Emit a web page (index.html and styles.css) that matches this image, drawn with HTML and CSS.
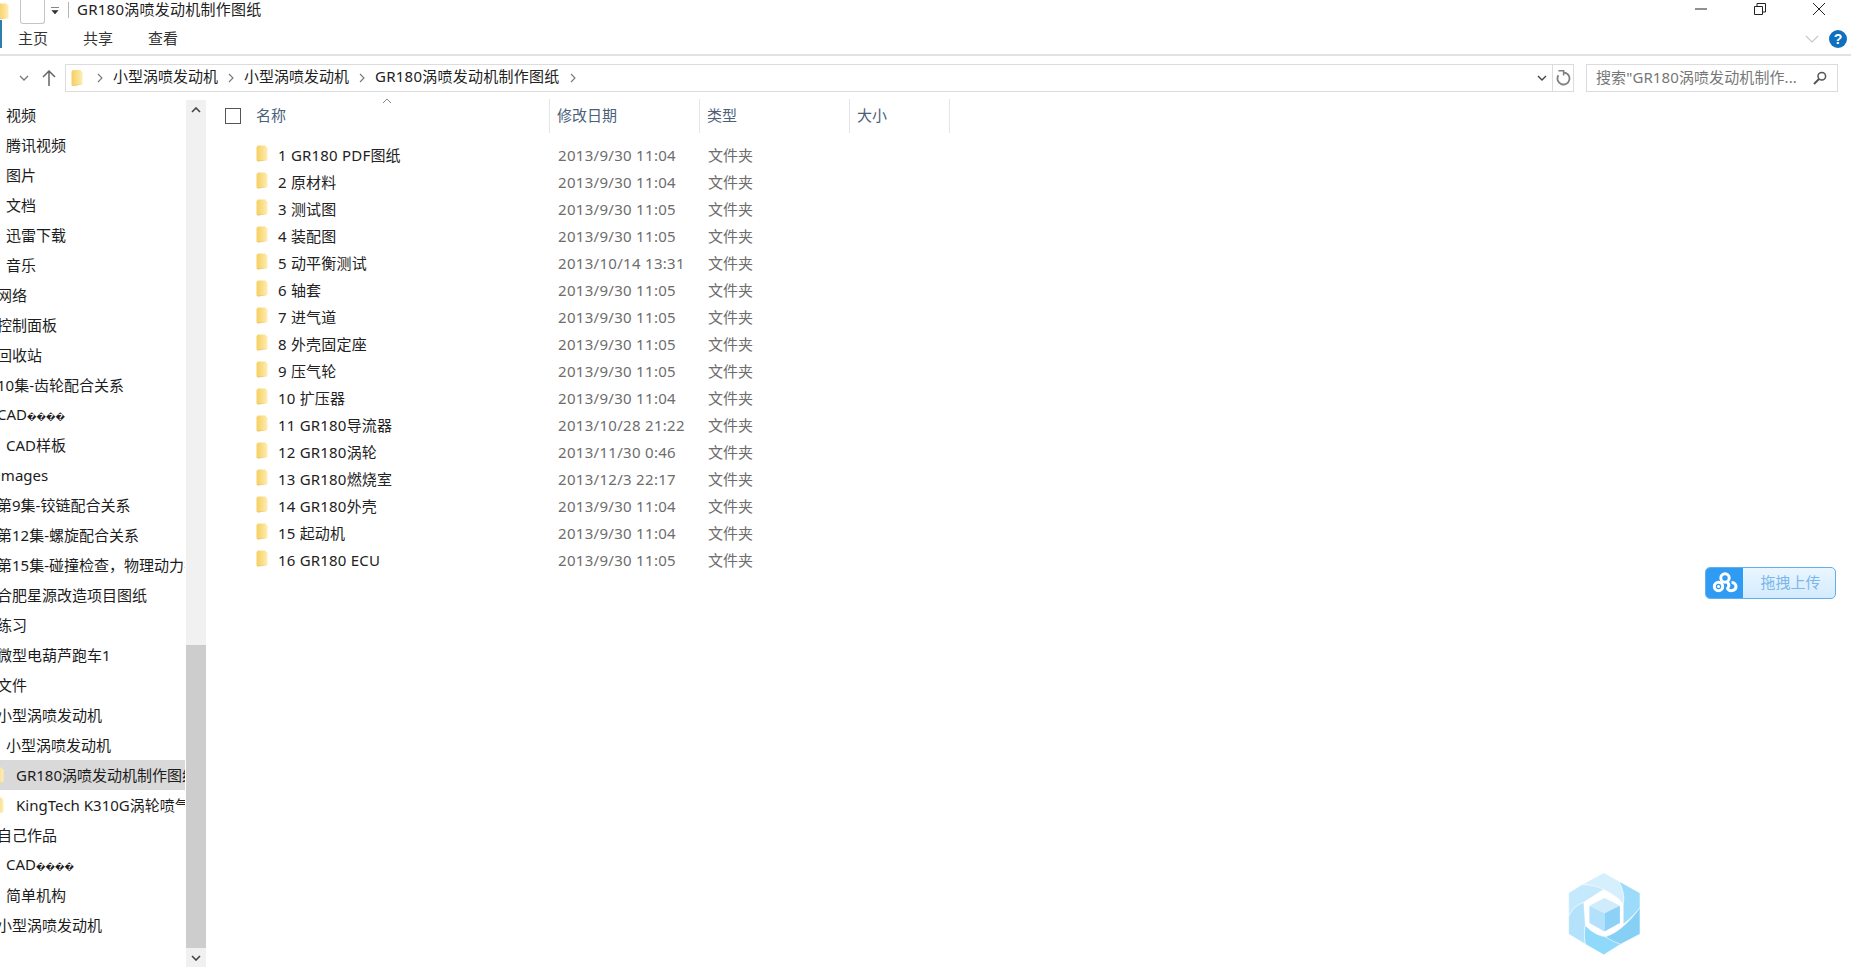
FILE: index.html
```html
<!DOCTYPE html>
<html lang="zh-CN">
<head>
<meta charset="utf-8">
<title>GR180涡喷发动机制作图纸</title>
<link rel="stylesheet" href="styles.css">
</head>
<body>
<svg class="defs" width="0" height="0" aria-hidden="true">
  <defs>
    <linearGradient id="fg" x1="0" y1="0" x2="1" y2="0">
      <stop offset="0" stop-color="#f6cf62"/>
      <stop offset="0.6" stop-color="#fbe08e"/>
      <stop offset="1" stop-color="#fdeeb8"/>
    </linearGradient>
    <symbol id="folder" viewBox="0 0 12 17">
      <path d="M2 0.5 L10 0.5 L10 2 L11.5 2 L11.5 15 L2 16.5 L0.5 15.5 L0.5 2 Z" fill="url(#fg)"/>
      <path d="M0.5 15.5 L11.5 15 L2 16.5 Z" fill="#e6c878"/>
    </symbol>
  </defs>
</svg>

<header class="titlebar">
  <div class="title-left">
    <svg class="tb-folder" viewBox="0 0 12 17"><use href="#folder"/></svg>
    <span class="qa-box"></span>
    <svg class="qa-drop" viewBox="0 0 8 8"><path d="M0 0.5H8M1 3.5H7L4 7Z" fill="#333" stroke="#333" stroke-width="0.6"/></svg>
    <span class="tb-sep"></span>
    <span class="tb-title gr">GR180涡喷发动机制作图纸</span>
  </div>
  <div class="winbtns">
    <svg class="wb" viewBox="0 0 12 12"><path d="M0 6H12" stroke="#222" fill="none"/></svg>
    <svg class="wb" viewBox="0 0 12 12"><path d="M0.5 3.5H8.5V11.5H0.5ZM3 3.5V0.5H11.5V9H8.5" stroke="#222" fill="none"/></svg>
    <svg class="wb" viewBox="0 0 12 12"><path d="M0 0L12 12M12 0L0 12" stroke="#222" fill="none"/></svg>
  </div>
</header>

<nav class="ribbon">
  <span class="tab-mark"></span>
  <div class="tabs">
    <span class="tab">主页</span>
    <span class="tab">共享</span>
    <span class="tab">查看</span>
  </div>
  <div class="ribbon-right">
    <svg class="rib-chev" viewBox="0 0 14 8"><path d="M1 1L7 7L13 1" stroke="#c4c9cd" stroke-width="1.2" fill="none"/></svg>
    <span class="help">?</span>
  </div>
</nav>

<section class="addr-row">
  <svg class="nav-down" viewBox="0 0 10 6"><path d="M1 1L5 5L9 1" stroke="#777" stroke-width="1.3" fill="none"/></svg>
  <svg class="nav-up" viewBox="0 0 14 16"><path d="M7 16V1M1 7L7 1L13 7" stroke="#666" stroke-width="1.5" fill="none"/></svg>
  <div class="addr">
    <svg class="addr-folder" viewBox="0 0 12 17"><use href="#folder"/></svg>
    <svg class="crumb-chev first" viewBox="0 0 6 10"><path d="M1 1L5 5L1 9" stroke="#777" stroke-width="1.1" fill="none"/></svg>
    <span class="crumb">小型涡喷发动机</span>
    <svg class="crumb-chev" viewBox="0 0 6 10"><path d="M1 1L5 5L1 9" stroke="#777" stroke-width="1.1" fill="none"/></svg>
    <span class="crumb">小型涡喷发动机</span>
    <svg class="crumb-chev" viewBox="0 0 6 10"><path d="M1 1L5 5L1 9" stroke="#777" stroke-width="1.1" fill="none"/></svg>
    <span class="crumb gr">GR180涡喷发动机制作图纸</span>
    <svg class="crumb-chev" viewBox="0 0 6 10"><path d="M1 1L5 5L1 9" stroke="#777" stroke-width="1.1" fill="none"/></svg>
    <svg class="addr-drop" viewBox="0 0 10 6"><path d="M1 1L5 5L9 1" stroke="#444" stroke-width="1.4" fill="none"/></svg>
    <span class="addr-refresh">
      <svg viewBox="0 0 16 16"><path d="M8.5 2.5A6 6 0 1 1 3.4 5.3" stroke="#808080" stroke-width="1.8" fill="none"/><path d="M3.4 0.8H8.6V5.6" stroke="#808080" stroke-width="1.5" fill="none"/></svg>
    </span>
  </div>
  <div class="search">
    <span class="search-text">搜索"GR180涡喷发动机制作...</span>
    <svg class="search-ico" viewBox="0 0 14 14"><circle cx="8.8" cy="5.2" r="3.8" stroke="#555" stroke-width="1.5" fill="none"/><path d="M6 8L1 13" stroke="#555" stroke-width="2" fill="none"/></svg>
  </div>
</section>

<main class="main">
  <aside class="side">
    <ul class="tree">
      <li class="node l1">视频</li>
      <li class="node l1">腾讯视频</li>
      <li class="node l1">图片</li>
      <li class="node l1">文档</li>
      <li class="node l1">迅雷下载</li>
      <li class="node l1">音乐</li>
      <li class="node l0">网络</li>
      <li class="node l0">控制面板</li>
      <li class="node l0">回收站</li>
      <li class="node l0">10集-齿轮配合关系</li>
      <li class="node l0"><span>CAD<span class="bad">����</span></span></li>
      <li class="node l1">CAD样板</li>
      <li class="node l0">images</li>
      <li class="node l0">第9集-铰链配合关系</li>
      <li class="node l0">第12集-螺旋配合关系</li>
      <li class="node l0">第15集-碰撞检查，物理动力学</li>
      <li class="node l0">合肥星源改造项目图纸</li>
      <li class="node l0">练习</li>
      <li class="node l0">微型电葫芦跑车1</li>
      <li class="node l0">文件</li>
      <li class="node l0">小型涡喷发动机</li>
      <li class="node l1">小型涡喷发动机</li>
      <li class="node l2 sel"><svg class="tree-folder" viewBox="0 0 12 17"><use href="#folder"/></svg>GR180涡喷发动机制作图纸</li>
      <li class="node l2"><svg class="tree-folder" viewBox="0 0 12 17"><use href="#folder"/></svg>KingTech K310G涡轮喷气发动机</li>
      <li class="node l0">自己作品</li>
      <li class="node l1"><span>CAD<span class="bad">����</span></span></li>
      <li class="node l1">简单机构</li>
      <li class="node l0">小型涡喷发动机</li>
    </ul>
    <div class="sbar">
      <span class="sbtn"><svg viewBox="0 0 10 6"><path d="M1 5L5 1L9 5" stroke="#444" stroke-width="1.6" fill="none"/></svg></span>
      <span class="strack"></span>
      <span class="sthumb"></span>
      <span class="sbtn"><svg viewBox="0 0 10 6"><path d="M1 1L5 5L9 1" stroke="#444" stroke-width="1.6" fill="none"/></svg></span>
    </div>
  </aside>

  <section class="files">
    <div class="head">
      <span class="h-check"><span class="checkbox"></span></span>
      <span class="hc h-name">名称
        <svg class="sort" viewBox="0 0 10 6"><path d="M1 5L5 1L9 5" stroke="#888" fill="none"/></svg>
      </span>
      <span class="hc h-date">修改日期</span>
      <span class="hc h-type">类型</span>
      <span class="hc h-size">大小</span>
    </div>
    <ul class="rows">
      <li class="row"><svg class="row-folder" viewBox="0 0 12 17"><use href="#folder"/></svg><span class="c-name">1 GR180 PDF图纸</span><span class="c-date">2013/9/30 11:04</span><span class="c-type">文件夹</span></li>
      <li class="row"><svg class="row-folder" viewBox="0 0 12 17"><use href="#folder"/></svg><span class="c-name">2 原材料</span><span class="c-date">2013/9/30 11:04</span><span class="c-type">文件夹</span></li>
      <li class="row"><svg class="row-folder" viewBox="0 0 12 17"><use href="#folder"/></svg><span class="c-name">3 测试图</span><span class="c-date">2013/9/30 11:05</span><span class="c-type">文件夹</span></li>
      <li class="row"><svg class="row-folder" viewBox="0 0 12 17"><use href="#folder"/></svg><span class="c-name">4 装配图</span><span class="c-date">2013/9/30 11:05</span><span class="c-type">文件夹</span></li>
      <li class="row"><svg class="row-folder" viewBox="0 0 12 17"><use href="#folder"/></svg><span class="c-name">5 动平衡测试</span><span class="c-date">2013/10/14 13:31</span><span class="c-type">文件夹</span></li>
      <li class="row"><svg class="row-folder" viewBox="0 0 12 17"><use href="#folder"/></svg><span class="c-name">6 轴套</span><span class="c-date">2013/9/30 11:05</span><span class="c-type">文件夹</span></li>
      <li class="row"><svg class="row-folder" viewBox="0 0 12 17"><use href="#folder"/></svg><span class="c-name">7 进气道</span><span class="c-date">2013/9/30 11:05</span><span class="c-type">文件夹</span></li>
      <li class="row"><svg class="row-folder" viewBox="0 0 12 17"><use href="#folder"/></svg><span class="c-name">8 外壳固定座</span><span class="c-date">2013/9/30 11:05</span><span class="c-type">文件夹</span></li>
      <li class="row"><svg class="row-folder" viewBox="0 0 12 17"><use href="#folder"/></svg><span class="c-name">9 压气轮</span><span class="c-date">2013/9/30 11:05</span><span class="c-type">文件夹</span></li>
      <li class="row"><svg class="row-folder" viewBox="0 0 12 17"><use href="#folder"/></svg><span class="c-name">10 扩压器</span><span class="c-date">2013/9/30 11:04</span><span class="c-type">文件夹</span></li>
      <li class="row"><svg class="row-folder" viewBox="0 0 12 17"><use href="#folder"/></svg><span class="c-name">11 GR180导流器</span><span class="c-date">2013/10/28 21:22</span><span class="c-type">文件夹</span></li>
      <li class="row"><svg class="row-folder" viewBox="0 0 12 17"><use href="#folder"/></svg><span class="c-name">12 GR180涡轮</span><span class="c-date">2013/11/30 0:46</span><span class="c-type">文件夹</span></li>
      <li class="row"><svg class="row-folder" viewBox="0 0 12 17"><use href="#folder"/></svg><span class="c-name">13 GR180燃烧室</span><span class="c-date">2013/12/3 22:17</span><span class="c-type">文件夹</span></li>
      <li class="row"><svg class="row-folder" viewBox="0 0 12 17"><use href="#folder"/></svg><span class="c-name">14 GR180外壳</span><span class="c-date">2013/9/30 11:04</span><span class="c-type">文件夹</span></li>
      <li class="row"><svg class="row-folder" viewBox="0 0 12 17"><use href="#folder"/></svg><span class="c-name">15 起动机</span><span class="c-date">2013/9/30 11:04</span><span class="c-type">文件夹</span></li>
      <li class="row"><svg class="row-folder" viewBox="0 0 12 17"><use href="#folder"/></svg><span class="c-name">16 GR180 ECU</span><span class="c-date">2013/9/30 11:05</span><span class="c-type">文件夹</span></li>
    </ul>
  </section>
</main>

<div class="upload">
  <span class="up-ico">
    <svg viewBox="0 0 26 22"><g fill="none" stroke="#fff" stroke-width="3"><circle cx="13" cy="6" r="4.2"/><circle cx="6.5" cy="14.5" r="4.2"/><path d="M15 9.5C17 12 17.5 14 16 15.5C14.5 17 17.5 19 20 18.6C22.5 18.2 24 16.5 24 14.5C24 12 22 10.5 19.5 10.5"/></g><circle cx="6.5" cy="14.5" r="1.6" fill="#fff"/></svg>
  </span>
  <span class="up-text">拖拽上传</span>
</div>

<svg class="logo" viewBox="80 32 224 256" aria-hidden="true">
  <g stroke="#fff" stroke-width="1.5">
    <path d="M125 72L190 37L235 62C250 90 252 115 248 130C230 105 180 75 125 72Z" fill="#d6effd"/>
    <path d="M85 97L125 72C150 73 170 78 190 86L130 125C105 135 92 150 85 168Z" fill="#c4e8fc"/>
    <path d="M85 168C92 150 105 135 130 125L135 195C130 215 132 235 135 250L85 220Z" fill="#b4e2fb"/>
    <path d="M135 195C155 215 175 225 195 228L240 250L190 282L135 250C132 235 130 215 135 195Z" fill="#8fd9fb"/>
    <path d="M195 228C235 215 270 180 298 140V220L240 250C225 245 210 238 195 228Z" fill="#86d0f6"/>
    <path d="M235 62L298 97V140C280 165 262 180 248 190L248 130C252 115 250 90 235 62Z" fill="#9cdcfa"/>
  </g>
  <path d="M147 135L192 112L238 135L192 158Z" fill="#cfebfc"/>
  <path d="M147 135L192 158V212L147 187Z" fill="#b3e0fa"/>
  <path d="M238 135L192 158V212L238 187Z" fill="#8dd2f6"/>
</svg>
</body>
</html>
```
FILE: styles.css
```css
* { box-sizing: border-box; }
html, body { margin: 0; padding: 0; }
body {
  width: 1851px;
  height: 967px;
  overflow: hidden;
  position: relative;
  background: #fff;
  color: #1c1c1c;
  font: 15px/20px "Noto Sans", "Noto Sans CJK SC", sans-serif;
  display: flex;
  flex-direction: column;
}
ul { list-style: none; margin: 0; padding: 0; }
svg { display: block; flex: none; }
.defs { position: absolute; }
.gr { letter-spacing: 0.25px; }

/* title bar */
.titlebar { height: 18px; display: flex; justify-content: space-between; flex: none; }
.title-left { display: flex; align-items: flex-start; position: relative; }
.tb-folder { width: 12px; height: 17px; margin: 3px 0 0 -3px; }
.qa-box { width: 25px; height: 24px; margin-left: 11px; border: 1px solid #c4c4c4; border-top: 0; border-radius: 0 0 3px 3px; flex: none; }
.qa-drop { width: 8px; height: 8px; margin: 7px 0 0 6px; }
.tb-sep { width: 1px; height: 16px; margin: 2px 0 0 9px; background: #b5b5b5; }
.tb-title { margin: -1px 0 0 8px; white-space: nowrap; color: #222; }
.winbtns { display: flex; gap: 47px; padding: 3px 26px 0 0; }
.wb { width: 12px; height: 12px; }

/* ribbon */
.ribbon { height: 38px; display: flex; align-items: center; border-bottom: 2px solid #e2e2e2; flex: none; position: relative; }
.tab-mark { width: 2px; height: 28px; background: #2b7fa8; margin-top: -4px; }
.tabs { display: flex; gap: 35px; margin: 4px 0 0 16px; }
.tab { color: #333; }
.ribbon-right { margin-left: auto; display: flex; align-items: center; gap: 10px; padding-right: 4px; margin-top: 5px; }
.rib-chev { width: 14px; height: 8px; }
.help { width: 18px; height: 18px; border-radius: 50%; background: #1070c0; color: #fff; font: bold 14px/18px "Liberation Sans", sans-serif; text-align: center; }

/* address row */
.addr-row { height: 35px; padding-top: 8px; display: flex; align-items: flex-start; flex: none; }
.nav-down { width: 10px; height: 6px; margin: 11px 0 0 19px; }
.nav-up { width: 14px; height: 16px; margin: 6px 0 0 13px; }
.addr { width: 1509px; height: 28px; margin-left: 9px; border: 1px solid #dcdcdc; display: flex; align-items: center; }
.addr-folder { width: 12px; height: 18px; margin-left: 5px; }
.crumb-chev { width: 6px; height: 10px; margin: 0 10px; }
.crumb-chev.first { margin-left: 14px; margin-right: 10px; }
.crumb { white-space: nowrap; color: #222; margin-top: -4px; }
.addr-drop { width: 10px; height: 6px; margin-left: auto; }
.addr-refresh { width: 21px; height: 26px; margin-left: 5px; border-left: 1px solid #dcdcdc; display: flex; align-items: center; justify-content: center; }
.addr-refresh svg { width: 16px; height: 16px; }
.search { width: 252px; height: 28px; margin-left: 12px; border: 1px solid #dcdcdc; display: flex; align-items: center; padding: 0 10px 0 9px; color: #777; }
.search-text { white-space: nowrap; margin-top: -2px; letter-spacing: 0.1px; }
.search-ico { width: 14px; height: 14px; margin-left: auto; }

/* main */
.main { flex: 1; min-height: 0; display: flex; }
.side { width: 206px; flex: none; display: flex; padding-top: 9px; overflow: hidden; }
.tree { width: 185px; margin-right: 1px; flex: none; overflow: hidden; }
.node { height: 30px; line-height: 28px; white-space: nowrap; overflow: hidden; display: flex; align-items: center; }
.l0 { text-indent: -3px; margin-top: 0; }
.l1 { padding-left: 6px; }
.l2 { padding-left: 6px; }
.bad { font-family: "DejaVu Sans", sans-serif; font-size: 8.5px; font-weight: bold; }
.sel { background: #d9d9d9; }
.tree-folder { width: 12px; height: 17px; margin-left: -14px; margin-right: 12px; }
.sbar { width: 20px; flex: none; display: flex; flex-direction: column; background: #f1f1f1; }
.sbtn { height: 19px; flex: none; display: flex; align-items: center; justify-content: center; }
.sbtn svg { width: 10px; height: 6px; }
.strack { flex: 1; }
.sthumb { height: 303px; flex: none; background: #cdcdcd; }

.files { flex: 1; min-width: 0; }
.head { display: flex; height: 34px; margin-top: 8px; color: #4c607a; }
.h-check { width: 49px; padding: 9px 0 0 19px; flex: none; }
.checkbox { display: block; width: 16px; height: 16px; border: 1px solid #555; }
.hc { height: 34px; padding: 6px 0 0 7px; border-right: 1px solid #e5e5e5; flex: none; position: relative; }
.h-name { width: 295px; padding-left: 1px; }
.h-date { width: 150px; }
.h-type { width: 150px; }
.h-size { width: 100px; }
.sort { position: absolute; left: 127px; top: -1px; width: 10px; height: 6px; }
.rows { margin-top: 8px; }
.row { height: 27px; display: flex; align-items: center; padding-left: 50px; }
.row-folder { width: 12px; height: 17px; margin-top: -3px; }
.c-name { width: 290px; padding-left: 10px; color: #222; white-space: nowrap; letter-spacing: 0.2px; }
.c-date { width: 150px; color: #6d6d6d; white-space: nowrap; letter-spacing: 0.3px; }
.c-type { color: #6d6d6d; }

/* overlays */
.upload { position: absolute; left: 1705px; top: 567px; width: 131px; height: 32px; display: flex; border: 1px solid #64aeea; border-radius: 5px; overflow: hidden; background: linear-gradient(#eaf6ff, #d3ebfe); }
.up-ico { width: 37px; background: #2f9bf3; display: flex; align-items: center; justify-content: center; flex: none; }
.up-ico svg { width: 26px; height: 22px; }
.up-text { flex: 1; text-align: center; color: #7db7ea; font-size: 15px; line-height: 29px; padding-left: 3px; }
.logo { position: absolute; left: 1567px; top: 871px; width: 75px; height: 86px; }
```
